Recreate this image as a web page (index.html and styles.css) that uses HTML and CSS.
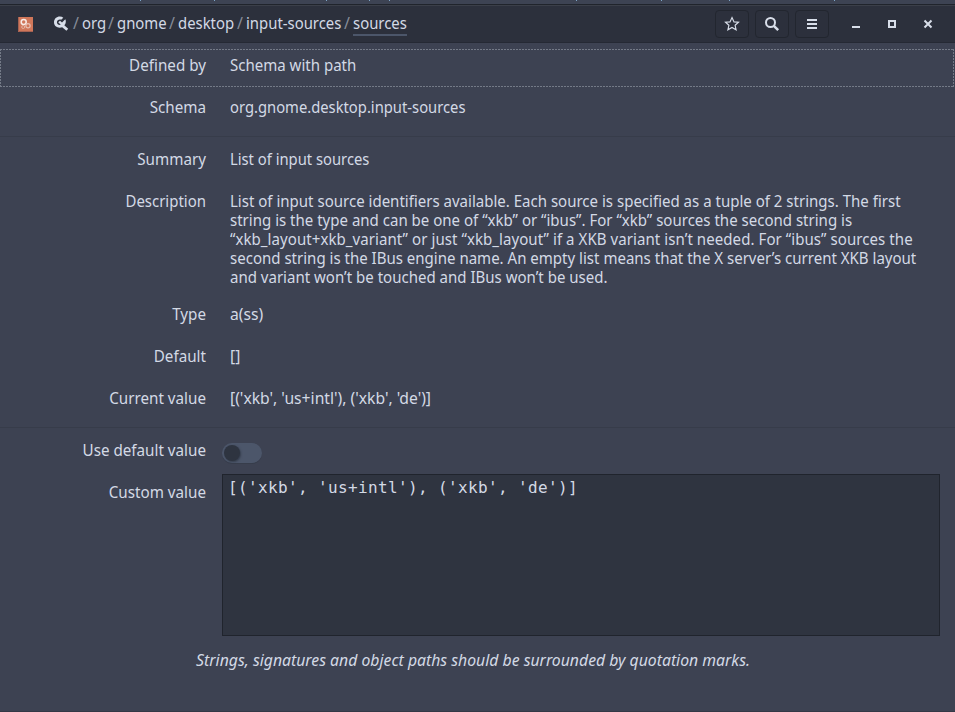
FILE: index.html
```
<!DOCTYPE html>
<html lang="en">
<head>
<meta charset="utf-8">
<title>dconf Editor</title>
<link rel="stylesheet" href="styles.css">
</head>
<body>
<div class="backdrop"></div>
<header class="bar">
  <svg class="app" width="15" height="15" viewBox="0 0 15 15"><rect width="15" height="15" fill="#d0775a"/><path d="M.5 0V14.5H15" fill="none" stroke="#985c50" stroke-width=".8"/><circle cx="5.7" cy="5" r="2.5" fill="none" stroke="#f8ece7" stroke-width="1.5"/><circle cx="5.2" cy="10" r="1.5" fill="none" stroke="#e5b4a3"/><circle cx="10" cy="8.8" r="2.1" fill="none" stroke="#e9c0b2" stroke-width="1.2"/></svg>
  <nav class="path">
    <svg class="tool" width="16" height="16" viewBox="0 0 16 16"><path d="M6.8 .6C8.2 .6 9.4 1 10.3 1.7L8.2 3.8C6 3 3.9 4.3 3.9 6.3C3.9 8.3 5.8 9.3 7.8 8.8L5.2 6.2L7 4.8L9 6.5L12.3 3.2C13 4.6 13 6.4 12.3 8L11.3 9.2L15.2 12.8L13.4 14.8L9.2 11.2C5.2 12.8 1 10.2 1 6.2C1 3 3.6 .6 6.8 .6Z" fill="#d8dee9"/></svg>
    <b>/</b><span class="w-org"><em>org</em></span><b>/</b><span class="w-gnome"><em>gnome</em></span><b>/</b><span class="w-desktop"><em>desktop</em></span><b>/</b><span class="w-input"><em>input-sources</em></span><b>/</b><span class="w-sources current"><em>sources</em></span>
  </nav>
  <div class="buttons">
    <button aria-label="Bookmark"><svg width="16" height="16" viewBox="0 0 16 16"><path d="M8 1.6L10 5.9L14.5 6.2L11.1 9.3L12.1 13.8L8 11.5L3.9 13.8L4.9 9.3L1.5 6.2L6 5.9Z" fill="none" stroke="#d8dee9" stroke-width="1.15"/></svg></button>
    <button aria-label="Search"><svg width="16" height="16" viewBox="0 0 16 16"><circle cx="6.5" cy="6.5" r="4.5" fill="none" stroke="#d8dee9" stroke-width="2"/><path d="M9.8 9.8L14.2 14.2" stroke="#d8dee9" stroke-width="2.5"/></svg></button>
    <button aria-label="Menu"><svg width="16" height="16" viewBox="0 0 16 16"><path d="M3 4H13M3 8H13M3 12H13" stroke="#d8dee9" stroke-width="2"/></svg></button>
  </div>
  <div class="controls">
    <svg width="16" height="16" viewBox="0 0 16 16"><path d="M4 11H12" stroke="#d8dee9" stroke-width="2"/></svg>
    <svg width="16" height="16" viewBox="0 0 16 16"><rect x="5" y="5" width="6" height="6" fill="none" stroke="#d8dee9" stroke-width="2"/></svg>
    <svg width="16" height="16" viewBox="0 0 16 16"><path d="M4.5 4.5L11.5 11.5M11.5 4.5L4.5 11.5" stroke="#d8dee9" stroke-width="2"/></svg>
  </div>
</header>
<main>
  <section>
    <div class="row focused"><label>Defined by</label><p>Schema with path</p></div>
    <div class="row"><label>Schema</label><p class="tight">org.gnome.desktop.input-sources</p></div>
  </section>
  <section>
    <div class="row"><label>Summary</label><p class="tight">List of input sources</p></div>
    <div class="row"><label class="narrow">Description</label><p>List of input source identifiers available. Each source is specified as a tuple of 2 strings. The first<br>string is the type and can be one of “xkb” or “ibus”. For “xkb” sources the second string is<br><span class="third">“xkb_layout+xkb_variant” or just “xkb_layout” if a XKB variant isn’t needed. For “ibus” sources the</span><br>second string is the IBus engine name. An empty list means that the X server’s current XKB layout<br>and variant won’t be touched and IBus won’t be used.</p></div>
    <div class="row"><label>Type</label><p class="wide">a(ss)</p></div>
    <div class="row"><label>Default</label><p class="wide">[]</p></div>
    <div class="row"><label>Current value</label><p class="wide">[('xkb', 'us+intl'), ('xkb', 'de')]</p></div>
  </section>
  <section>
    <div class="row"><label>Use default value</label><div class="switch"></div></div>
    <div class="row editor-row"><label>Custom value</label><div class="editor">[('xkb', 'us+intl'), ('xkb', 'de')]</div></div>
    <p class="hint">Strings, signatures and object paths should be surrounded by quotation marks.</p>
  </section>
</main>
</body>
</html>
```
FILE: styles.css
```
* { box-sizing: border-box; }
body {
  margin: 0;
  height: 712px;
  overflow: hidden;
  background: #3d4252;
  color: #d3d9e5;
  font: 16px/19px "Noto Sans", "Open Sans", sans-serif;
  border-bottom: 1px solid #343846;
}
p { margin: 0; }
.backdrop {
  --tick: linear-gradient(#7fa6c8, #7fa6c8);
  height: 4px;
  background-color: #3d4353;
  background-image: var(--tick), var(--tick), var(--tick), var(--tick), var(--tick), var(--tick), var(--tick), var(--tick), var(--tick);
  background-repeat: no-repeat;
  background-size: 1px 1px;
  background-position: 140px 0, 214px 0, 326px 0, 369px 0, 389px 0, 576px 0, 661px 0, 729px 0, 834px 0;
}
.bar {
  height: 39px;
  display: flex;
  align-items: center;
  background: #2c303c;
  border-top: 1px solid #20242c;
  border-bottom: 1px solid #252934;
  box-shadow: inset 0 1px #3b3f49;
}
.app { margin: 1px 0 0 18px; }
.path { display: flex; align-items: center; margin-left: 20px; height: 24px; white-space: nowrap; }
.path b { width: 12px; text-align: center; font-weight: 400; color: #858b98; }
.path span { height: 19px; }
.path em { display: inline-block; font-style: normal; transform: scaleX(.93); transform-origin: left; }
.tool { margin-right: 1px; }
.w-org { width: 23px; }
.w-gnome { width: 49px; }
.w-desktop { width: 56px; }
.w-input { width: 95px; }
.w-sources { width: 54px; }
.path .current { height: 24px; padding-top: 2px; border-bottom: 2px solid #4c566a; }
.buttons { display: flex; gap: 6px; margin-left: auto; }
.buttons button {
  width: 34px;
  height: 28px;
  padding: 0;
  display: grid;
  place-items: center;
  border: 1px solid #22262f;
  border-radius: 4px;
  background: #2c303c;
}
.controls { display: flex; gap: 20px; margin: 0 19px; }
main { padding-top: 4px; }
section { display: flow-root; padding-bottom: 3px; }
section + section { border-top: 1px solid #373c4a; padding-top: 4px; }
.row {
  display: grid;
  grid-template-columns: 206px max-content;
  column-gap: 24px;
  min-height: 38px;
  margin-top: 2px;
  margin-bottom: 4px;
  padding: 7px 0 7px;
}
.row label { text-align: right; white-space: nowrap; transform: scaleX(.95); transform-origin: right; }
.row label.narrow { transform: scaleX(.935); }
.row p { white-space: nowrap; transform: scaleX(.939); transform-origin: left; }
.row p.tight { transform: scaleX(.923); }
.row p.wide { transform: scaleX(.98); }
.third { letter-spacing: .07px; }
.row + .row { margin-top: 4px; }
.focused {
  --dash: #747a87 0 2px, transparent 2px 3px;
  margin-right: 1px;
  background:
    repeating-linear-gradient(90deg, var(--dash)) top / 100% 1px no-repeat,
    repeating-linear-gradient(90deg, var(--dash)) bottom / 100% 1px no-repeat,
    repeating-linear-gradient(var(--dash)) left / 1px 100% no-repeat,
    repeating-linear-gradient(var(--dash)) right / 1px 100% no-repeat;
}
.switch {
  width: 40px;
  height: 20px;
  margin: 2px 0 0 -8px;
  padding: 2px;
  border-radius: 10px;
  background: #4c566a;
  box-shadow: 0 1px #373d4b;
}
.switch::before {
  content: "";
  display: block;
  width: 16px;
  height: 16px;
  border-radius: 50%;
  background: #2e3440;
  box-shadow: 1px 1px 2px #343c4b;
}
.editor-row { grid-template-columns: 206px 1fr; }
.editor {
  height: 162px;
  margin: -9px 15px 0 -8px;
  padding: 3px 5px;
  border: 1px solid #20242d;
  background: #2f3440;
  font: 16px/19px "DejaVu Sans Mono", monospace;
  letter-spacing: .367px;
}
.hint { margin-top: 8px; padding-right: 9px; text-align: center; font-style: italic; transform: scaleX(.986); }
```
